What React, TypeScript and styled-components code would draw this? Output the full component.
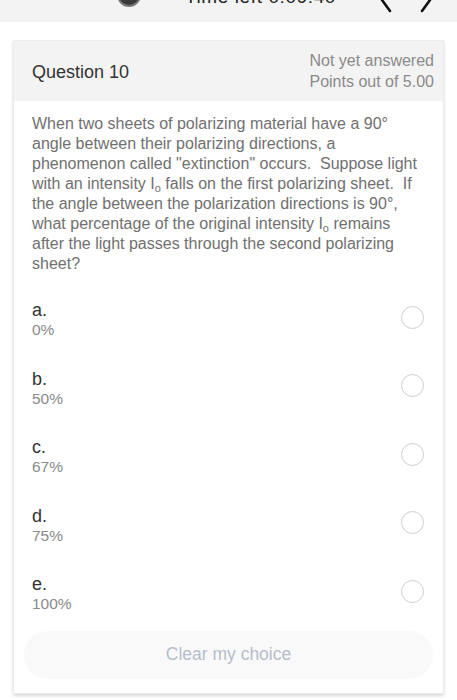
import React from "react";
import styled, { createGlobalStyle } from "styled-components";

const options = [
  { letter: "a.", value: "0%" },
  { letter: "b.", value: "50%" },
  { letter: "c.", value: "67%" },
  { letter: "d.", value: "75%" },
  { letter: "e.", value: "100%" },
];

const App = () => {
  return (
    <Wrapper>
      <GlobalStyle />
      <TopBar>
        <TopInner>
          <TimerDot />
          <TimerText>Time left 0:09:40</TimerText>
          <NavArrows>
            <svg width="14" height="26" viewBox="0 0 14 26">
              <path d="M11 2 L3 13 L11 24" fill="none" stroke="#111" strokeWidth="2.6" strokeLinecap="round" strokeLinejoin="round" />
            </svg>
            <svg width="14" height="26" viewBox="0 0 14 26">
              <path d="M3 2 L11 13 L3 24" fill="none" stroke="#111" strokeWidth="2.6" strokeLinecap="round" strokeLinejoin="round" />
            </svg>
          </NavArrows>
        </TopInner>
      </TopBar>
      <Card>
        <CardHeader>
          <QuestionTitle>Question 10</QuestionTitle>
          <Status>
            <div>Not yet answered</div>
            <div>Points out of 5.00</div>
          </Status>
        </CardHeader>
        <CardBody>
          <QuestionText>
            When two sheets of polarizing material have a 90° angle between their polarizing directions, a
            phenomenon called "extinction" occurs.&nbsp; Suppose light with an intensity I<Sub>o</Sub> falls on
            the first polarizing sheet.&nbsp; If the angle between the polarization directions is 90°, what
            percentage of the original intensity I<Sub>o</Sub> remains after the light passes through the second
            polarizing sheet?
          </QuestionText>
          <OptionList>
            {options.map((opt) => (
              <OptionRow key={opt.letter}>
                <OptionText>
                  <OptionLetter>{opt.letter}</OptionLetter>
                  <OptionValue>{opt.value}</OptionValue>
                </OptionText>
                <Radio />
              </OptionRow>
            ))}
          </OptionList>
          <ClearButton>Clear my choice</ClearButton>
        </CardBody>
      </Card>
    </Wrapper>
  );
};

const GlobalStyle = createGlobalStyle`
  body {
    margin: 0;
    background: #ffffff;
    font-family: "Liberation Sans", Arial, sans-serif;
  }
`;

const Wrapper = styled.div`
  width: 457px;
  height: 700px;
  overflow: hidden;
  background: #ffffff;
`;

const TopBar = styled.div`
  height: 22px;
  background: #f3f3f3;
  overflow: hidden;
`;

const TopInner = styled.div`
  display: flex;
  align-items: center;
  height: 40px;
  margin-top: -27px;
  padding-left: 117px;
`;

const TimerDot = styled.div`
  width: 24px;
  height: 24px;
  border-radius: 50%;
  background: #3a3a3a;
  border: 2px solid #777;
  box-sizing: border-box;
  margin-top: 4px;
`;

const TimerText = styled.div`
  margin-left: 44px;
  font-size: 19px;
  color: #222;
  letter-spacing: 0.6px;
  margin-top: 8px;
`;

const NavArrows = styled.div`
  display: flex;
  gap: 26px;
  margin-left: auto;
  margin-right: 24px;
  margin-top: 14px;
`;

const Card = styled.div`
  margin: 18px 13px 0;
  border: 1px solid #ececec;
  box-shadow: 0 2px 3px rgba(0, 0, 0, 0.15);
  background: #fff;
`;

const CardHeader = styled.div`
  background: #f3f3f3;
  height: 60px;
  display: flex;
  align-items: center;
  justify-content: space-between;
  padding: 0 9px 0 18px;
`;

const QuestionTitle = styled.div`
  font-size: 18px;
  color: #333;
  margin-top: 2px;
`;

const Status = styled.div`
  text-align: right;
  font-size: 16px;
  line-height: 21px;
  color: #8a8a8a;
`;

const CardBody = styled.div`
  padding: 13px 10px 14px 18px;
`;

const QuestionText = styled.div`
  font-size: 16px;
  line-height: 20px;
  color: #707070;
  padding-right: 9px;
`;

const Sub = styled.sub`
  font-size: 11px;
  vertical-align: -3px;
  line-height: 0;
`;

const OptionList = styled.div`
  display: flex;
  flex-direction: column;
  margin-top: 22px;
`;

const OptionRow = styled.div`
  display: flex;
  align-items: center;
  justify-content: space-between;
  height: 68.5px;
  padding-right: 9px;
  box-sizing: border-box;
  padding-bottom: 20px;
`;

const OptionText = styled.div`
  display: flex;
  flex-direction: column;
`;

const OptionLetter = styled.div`
  font-size: 18px;
  line-height: 20px;
  color: #333;
`;

const OptionValue = styled.div`
  font-size: 15.5px;
  line-height: 20px;
  color: #8a8a8a;
`;

const Radio = styled.div`
  width: 21px;
  height: 21px;
  border-radius: 50%;
  border: 1.5px solid #cfcfcf;
  margin-top: -6px;
`;

const ClearButton = styled.div`
  margin: -8px 0 0 -8px;
  height: 48px;
  border-radius: 24px;
  background: #f9f9fa;
  display: flex;
  align-items: center;
  justify-content: center;
  font-size: 17.5px;
  color: #b7bdca;
`;

export default App;
